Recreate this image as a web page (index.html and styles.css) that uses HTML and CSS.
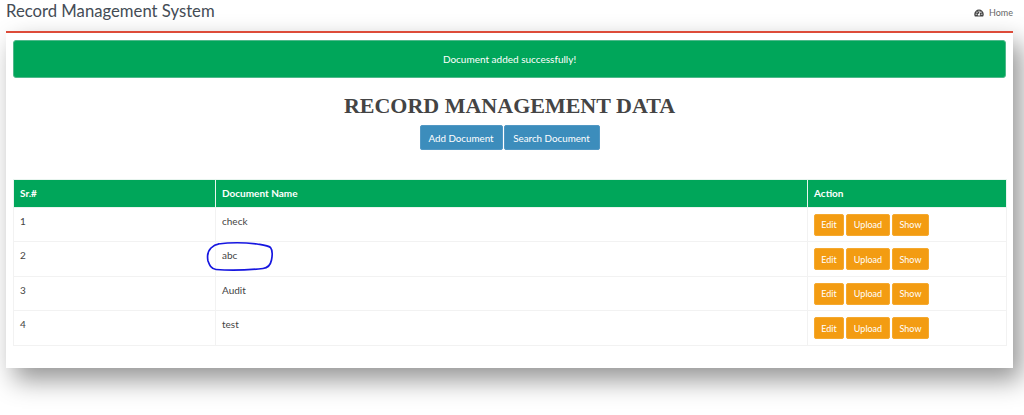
FILE: index.html
```html
<!DOCTYPE html>
<html lang="en">
<head>
<meta charset="utf-8">
<title>Record Management System</title>
<link rel="stylesheet" href="styles.css">
</head>
<body>
<header class="topbar">
  <span class="brand">Record Management System</span>
  <a class="home" href="#">
    <svg class="home-icon" viewBox="0 0 16 12" aria-hidden="true"><path fill-rule="evenodd" d="M8 0.5a7.6 7.6 0 0 0-7.6 7.6c0 1.2.3 2.2.8 3.1.2.3.4.4.7.4h12.2c.3 0 .5-.1.7-.4.5-.9.8-1.9.8-3.1A7.600 7.600 0 0 0 8 0.500zM8 2a1 1 0 1 1 0 2 1 1 0 0 1 0-2zM3.500 8.800a1 1 0 1 1 0-2 1 1 0 0 1 0 2zm1.300-3.100a1 1 0 1 1 0-2 1 1 0 0 1 0 2zM9.500 10h-3a1.500 1.500 0 0 1 .9-2.700l1.700-3.300a.6.6 0 0 1 1.100.5L9 7.500a1.500 1.500 0 0 1 .5 2.500zm1.700-4.300a1 1 0 1 1 0-2 1 1 0 0 1 0 2zm1.300 3.100a1 1 0 1 1 0-2 1 1 0 0 1 0 2z"/></svg>
    <span>Home</span>
  </a>
</header>
<main class="card">
  <div class="alert">Document added successfully!</div>
  <h1 class="title">RECORD MANAGEMENT DATA</h1>
  <div class="toolbar">
    <a class="btn btn-blue" href="#">Add Document</a>
    <a class="btn btn-blue btn-wide" href="#">Search Document</a>
  </div>
  <table class="records">
    <colgroup><col class="col-sr"><col class="col-name"><col class="col-action"></colgroup>
    <thead>
      <tr><th>Sr.#</th><th>Document Name</th><th>Action</th></tr>
    </thead>
    <tbody>
      <tr><td>1</td><td>check</td><td><div class="actions"><a class="act act-edit" href="#">Edit</a><a class="act act-upload" href="#">Upload</a><a class="act act-show" href="#">Show</a></div></td></tr>
      <tr><td>2</td><td class="marked">abc
        <svg class="scribble" viewBox="0 0 70 32" aria-hidden="true"><path d="M13 3C24 1.500 40 1.500 52 3C58 4 63 4.500 65.500 6.500C67.500 9 67.500 14 66.500 19C65.500 24 63 27 58 27.500C44 29 28 30 11 28.500C6 28 4.500 24 3 20C2 15 3 10 6 7C8 5 10 3.500 14 2.800"/></svg>
      </td><td><div class="actions"><a class="act act-edit" href="#">Edit</a><a class="act act-upload" href="#">Upload</a><a class="act act-show" href="#">Show</a></div></td></tr>
      <tr><td>3</td><td>Audit</td><td><div class="actions"><a class="act act-edit" href="#">Edit</a><a class="act act-upload" href="#">Upload</a><a class="act act-show" href="#">Show</a></div></td></tr>
      <tr><td>4</td><td>test</td><td><div class="actions"><a class="act act-edit" href="#">Edit</a><a class="act act-upload" href="#">Upload</a><a class="act act-show" href="#">Show</a></div></td></tr>
    </tbody>
  </table>
</main>
</body>
</html>
```
FILE: styles.css
```css
* { box-sizing: border-box; }
html, body { margin: 0; padding: 0; }
body {
  width: 1024px;
  height: 415px;
  overflow: hidden;
  background: #fff;
  color: #444;
  font-family: Lato, "Noto Sans", sans-serif;
  font-size: 10px;
}
a { text-decoration: none; }

.topbar {
  height: 31px;
  padding: 0 11px 0 6px;
  display: flex;
  justify-content: space-between;
  align-items: flex-start;
}
.brand {
  font-size: 16.700px;
  line-height: 23px;
  color: #444c55;
}
.home {
  display: flex;
  align-items: center;
  gap: 5px;
  margin-top: 7px;
  color: #666;
  font-size: 9px;
  line-height: 12px;
}
.home-icon { width: 10px; height: 8px; fill: #444; }

.card {
  margin-left: 6px;
  width: 1007px;
  height: 337px;
  padding: 7px 7px 0;
  background: #fff;
  border-top: 2px solid #dd4b39;
  box-shadow: 8px 12px 24px rgba(0, 0, 0, 0.42);
}
.alert {
  height: 38px;
  background: #00a65a;
  border: 1px solid #4fb98b;
  border-radius: 3px;
  color: #fff;
  font-size: 10px;
  display: flex;
  align-items: center;
  justify-content: center;
}
.title {
  margin: 16px 0 7px;
  text-align: center;
  font-family: "Liberation Serif", serif;
  font-size: 22px;
  line-height: 24px;
  font-weight: 700;
  color: #444;
}
.toolbar {
  display: flex;
  justify-content: center;
  gap: 1px;
}
.btn {
  height: 25px;
  width: 83px;
  border-radius: 2px;
  border: 1px solid #5298c4;
  color: #fff;
  font-size: 9.800px;
  display: flex;
  align-items: center;
  justify-content: center;
}
.btn-blue { background: #3c8dbc; }
.btn-wide { width: 96px; }

.records {
  margin: 29px 0 0;
  width: 993px;
  table-layout: fixed;
  border-collapse: collapse;
  font-size: 10px;
}
.col-sr { width: 202px; }
.col-name { width: 592px; }
.col-action { width: 199px; }
.records th {
  height: 27.500px;
  padding: 0 6px;
  background: #00a65a;
  color: #fff;
  text-align: left;
  font-weight: 700;
  border: 1px solid #e8f5ef;
}
.records td {
  height: 34.500px;
  padding: 0 6px 7px;
  border: 1px solid #f2f2f2;
  color: #444;
}
.records td:last-child { padding: 1px 6px 0; }
.marked { position: relative; }
.scribble {
  position: absolute;
  left: -11.500px;
  top: -1px;
  width: 70px;
  height: 32px;
  fill: none;
  stroke: #1616e0;
  stroke-width: 1.700;
}
.actions { display: flex; gap: 2px; }
.act {
  height: 22px;
  background: #f39c12;
  border: 1px solid #f5a92f;
  border-radius: 2px;
  color: #fff;
  font-size: 9px;
  display: flex;
  align-items: center;
  justify-content: center;
}
.act-edit { width: 30px; }
.act-upload { width: 44px; }
.act-show { width: 37px; }
```
